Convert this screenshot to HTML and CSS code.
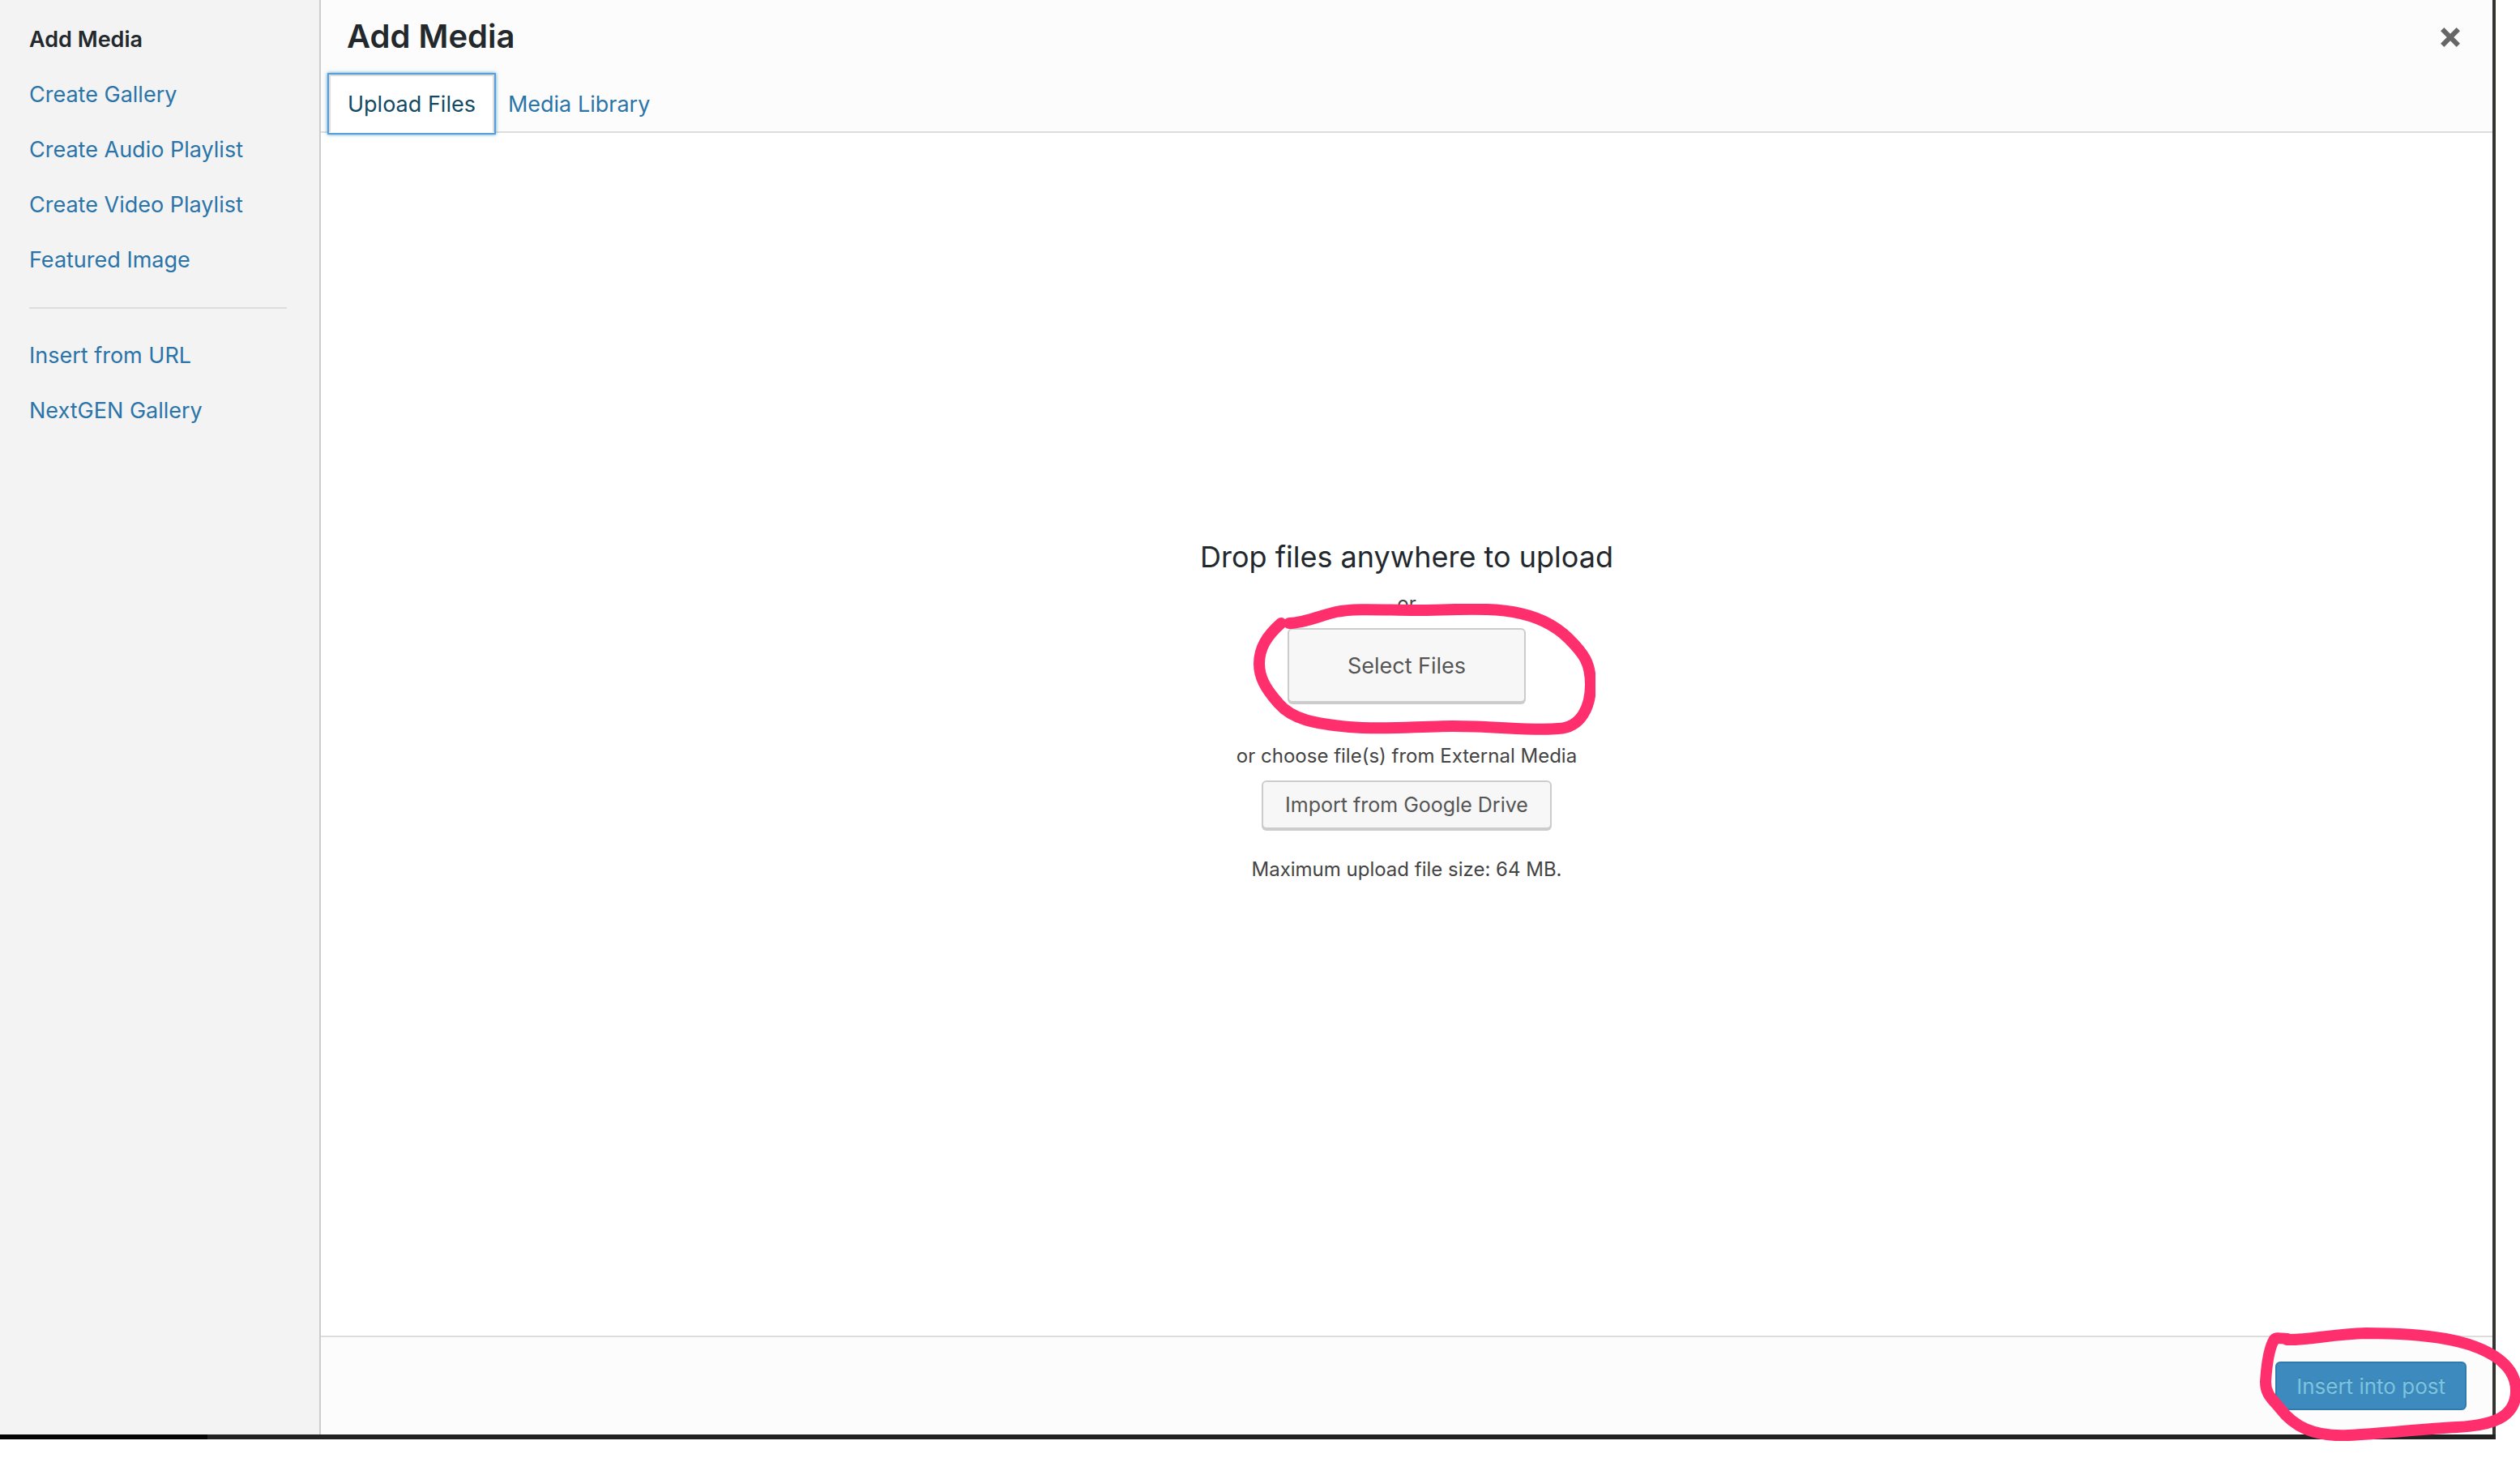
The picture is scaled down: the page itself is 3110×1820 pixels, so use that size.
FILE: index.html
```html
<!DOCTYPE html>
<html lang="en">
<head>
<meta charset="utf-8">
<title>Add Media</title>
<link rel="stylesheet" href="styles.css">
</head>
<body>
<div class="frame">
  <div class="modal">
    <nav class="menu" aria-label="Media actions">
      <a class="menu-item active" href="#add">Add Media</a>
      <a class="menu-item" href="#gallery">Create Gallery</a>
      <a class="menu-item" href="#audio">Create Audio Playlist</a>
      <a class="menu-item" href="#video">Create Video Playlist</a>
      <a class="menu-item" href="#featured">Featured Image</a>
      <hr class="separator">
      <a class="menu-item" href="#url">Insert from URL</a>
      <a class="menu-item" href="#nextgen">NextGEN Gallery</a>
    </nav>
    <main class="panel">
      <header class="header">
        <div class="title-row">
          <h1 class="title">Add Media</h1>
          <button class="close" type="button" aria-label="Close">
            <svg class="close-icon" viewBox="0 0 22 22" aria-hidden="true"><path d="M4 4L18 18M18 4L4 18" stroke="#666" stroke-width="5.6" stroke-linecap="square"/></svg>
          </button>
        </div>
        <div class="tabs">
          <a class="tab current" href="#upload">Upload Files</a>
          <a class="tab" href="#library">Media Library</a>
        </div>
      </header>
      <section class="uploader">
        <h2 class="drop-title">Drop files anywhere to upload</h2>
        <p class="note or">or</p>
        <div class="marked">
          <button class="button hero" type="button">Select Files</button>
          <svg class="mark mark-select" viewBox="0 0 424 164" aria-hidden="true"><path d="M46 24C64 24 86 14 104 10C128 5 166 8 202 8C230 8 256 6 290 7C328 8 366 18 391 43C410 62 418 73 418 100C418 126 407 153 378 154C348 157 300 151 248 151C204 151 164 156 120 152C78 148 50 143 33 123C16 104 9 90 9 74C9 54 19 39 36 24"/></svg>
        </div>
        <p class="note external">or choose file(s) from External Media</p>
        <button class="button import" type="button">Import from Google Drive</button>
        <p class="note limit">Maximum upload file size: 64 MB.</p>
      </section>
      <footer class="footer">
        <div class="marked">
          <button class="button primary" type="button" disabled>Insert into post</button>
          <svg class="mark mark-insert" viewBox="0 0 324 140" aria-hidden="true"><path d="M34 15C60 16 90 8 132 7C170 7 202 9 230 14C276 22 317 42 317 78C317 112 286 121 244 123C200 125 154 131 110 133C66 135 42 121 26 100C15 87 8 82 8 67C9 51 12 27 18 16C20 12 24 13 35 14"/></svg>
        </div>
      </footer>
    </main>
  </div>
</div>
</body>
</html>
```
FILE: styles.css
```css
*, *::before, *::after { box-sizing: border-box; }

body {
  margin: 0;
  min-height: 100vh;
  display: flex;
  padding: 0 30px 44px 0;
  overflow-x: clip;
  background: #fff;
  color: #444;
  font-family: Inter, "Liberation Sans", sans-serif;
  font-size: 26px;
}

.frame {
  flex: 1;
  display: flex;
  padding: 0 4px 6px 0;
  background:
    linear-gradient(#050505, #050505) left bottom / 256px 6px no-repeat,
    linear-gradient(#222, #222) left bottom / 100% 6px no-repeat,
    #353431;
}

.modal {
  flex: 1;
  display: grid;
  grid-template-columns: 396px 1fr;
}

.menu {
  display: flex;
  flex-direction: column;
  padding: 15px 40px 0 36px;
  background: #f3f3f3;
  border-right: 2px solid #ccc;
}

.menu-item {
  font-size: 27px;
  line-height: 68px;
  color: #2a74a9;
  text-decoration: none;
}

.menu-item.active { color: #23282d; font-weight: 600; }

.separator {
  width: 100%;
  height: 2px;
  margin: 24px 0;
  border: 0;
  background: #ddd;
}

.panel {
  display: flex;
  flex-direction: column;
  background: #fff;
}

.header {
  background: #fcfcfc;
  border-bottom: 2px solid #ddd;
}

.title-row {
  display: flex;
  justify-content: space-between;
  height: 92px;
  padding: 0 40px 0 32px;
}

.title {
  margin: 0;
  font-size: 40px;
  line-height: 90px;
  font-weight: 600;
  color: #23282d;
}

.close {
  display: flex;
  align-items: center;
  padding: 0;
  border: 0;
  background: none;
}

.close-icon { width: 24px; height: 24px; }

.tabs {
  display: flex;
  height: 70px;
  padding-left: 10px;
}

.tab {
  height: 72px;
  padding: 0 17px;
  font-size: 27px;
  line-height: 73px;
  color: #2a74a9;
  text-decoration: none;
}

.tab.current {
  padding: 0 21px;
  border: 2px solid #ddd;
  border-bottom-color: #fff;
  line-height: 69px;
  background: #fff;
  color: #124964;
  box-shadow: 0 0 0 2px #5b9dd9, 0 0 4px 2px rgba(30, 140, 190, 0.8);
}

.uploader {
  flex: 1;
  display: flex;
  flex-direction: column;
  align-items: center;
  justify-content: center;
  padding-bottom: 60px;
}

.drop-title {
  margin: 0;
  font-size: 36px;
  line-height: 56px;
  font-weight: 400;
  color: #23282d;
}

.note { margin: 0; font-size: 24px; line-height: 40px; }
.or { margin: 10px 0; }
.external { margin: 46px 0 10px; }
.limit { margin-top: 30px; }

.marked { position: relative; display: flex; }

.button {
  height: 60px;
  padding: 0 24px;
  border: 2px solid #ccc;
  border-radius: 6px;
  background: #f7f7f7;
  box-shadow: 0 2px 0 #ccc;
  color: #555;
  font-family: inherit;
  font-size: 26px;
}

.button.hero {
  height: 92px;
  padding: 0 72px;
  font-size: 27px;
}

.button.import {
  padding: 0 27px;
  font-size: 25px;
}

.button.primary {
  border-color: #307aae;
  background: #3d8bbe;
  box-shadow: none;
  color: #7cc4e0;
  text-shadow: 0 -2px 0 rgba(0, 0, 0, 0.1);
}

.mark {
  position: absolute;
  pointer-events: none;
  fill: none;
  stroke: #ff2f6d;
  stroke-width: 14px;
  stroke-linecap: round;
  stroke-linejoin: round;
}

.mark-select { left: -44px; top: -30px; width: 424px; height: 164px; }
.mark-insert { left: -20px; top: -42px; width: 324px; height: 140px; }

.footer {
  display: flex;
  justify-content: flex-end;
  padding: 30px 32px;
  border-top: 2px solid #ddd;
  background: #fcfcfc;
}
```
